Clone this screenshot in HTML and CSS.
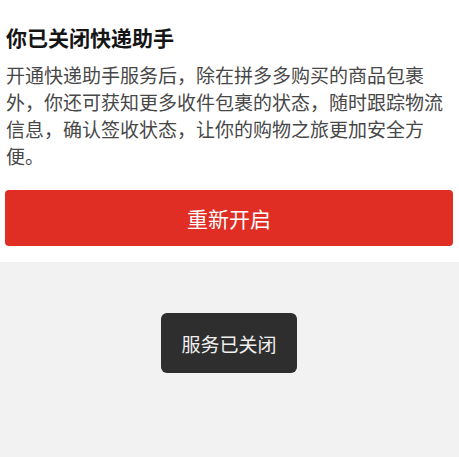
FILE: index.html
```html
<!DOCTYPE html>
<html lang="zh">
<head>
<meta charset="utf-8">
<link rel="stylesheet" href="styles.css">
</head>
<body>
<div class="card">
  <h1 class="title">你已关闭快递助手</h1>
  <p class="desc">开通快递助手服务后，除在拼多多购买的商品包裹外，你还可获知更多收件包裹的状态，随时跟踪物流信息，确认签收状态，让你的购物之旅更加安全方便。</p>
  <button class="btn">重新开启</button>
</div>
<div class="toast">服务已关闭</div>
</body>
</html>
```
FILE: styles.css
```css
html, body {
  margin: 0;
  padding: 0;
  background: #f2f2f2;
  font-family: "Noto Sans CJK SC", "Noto Sans", sans-serif;
  height: 100%;
}
.card {
  background: #fff;
  padding: 22px 6px 16px 6px;
  display: flex;
  flex-direction: column;
}
.title {
  margin: 0;
  font-size: 21px;
  line-height: 30px;
  font-weight: 700;
  color: #151516;
}
.desc {
  margin: 9px 0 0 0;
  font-size: 19px;
  line-height: 27px;
  color: #474747;
}
.btn {
  margin: 21px 0 0 -1px;
  height: 56px;
  width: 448px;
  border: none;
  border-radius: 4px;
  background: #e02e24;
  color: #fff;
  font-family: inherit;
  font-size: 21px;
  padding: 0;
}
.toast {
  position: absolute;
  left: 161px;
  top: 313px;
  width: 136px;
  height: 60px;
  border-radius: 6px;
  background: #2e2e2e;
  color: #f0f0f0;
  font-size: 19px;
  display: flex;
  align-items: center;
  justify-content: center;
}
```
